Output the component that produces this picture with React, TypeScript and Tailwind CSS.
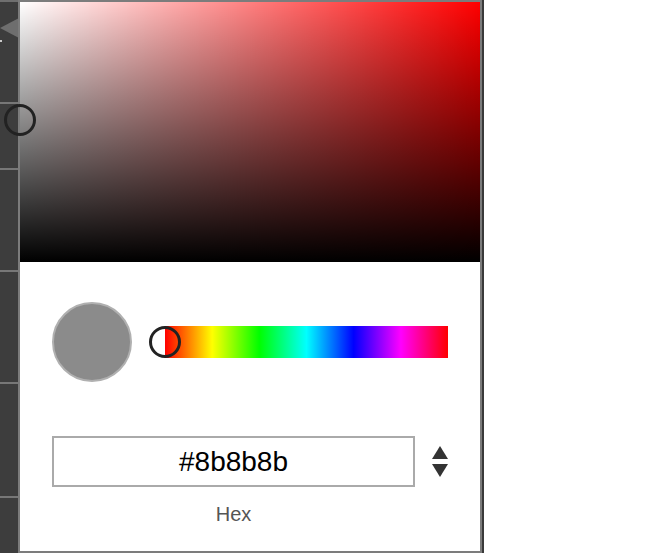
import React from 'react';

const App: React.FC = () => {
  const hex = '#8b8b8b';
  const lines = [100, 166, 268, 380, 494];

  return (
    <div className="flex w-[649px] h-[553px] bg-white font-['Liberation_Sans',Arial,sans-serif] overflow-hidden">
      {/* dark side strip behind the popover */}
      <div className="relative w-[18px] h-full bg-[#3d3d3d] border-t-2 border-[#6f6f6f]">
        {lines.map((y) => (
          <div key={y} className="absolute left-0 w-full h-[2px] bg-[#777]" style={{ top: y }} />
        ))}
        <div className="absolute left-0 top-[38px] w-[2px] h-[2px] bg-[#ccc]" />
        <div className="absolute left-0 top-[16px] w-0 h-0 border-y-[10px] border-y-transparent border-r-[19px] border-r-[#6e6e6e]" />
      </div>

      {/* popover */}
      <div className="relative flex flex-col w-[464px] h-full border-2 border-[#7c7c7c] bg-white">
        <div className="relative h-[260px] bg-[#ff0000]">
          <div className="absolute inset-0 bg-[linear-gradient(to_right,#ffffff,rgba(255,255,255,0))]" />
          <div className="absolute inset-0 bg-[linear-gradient(to_top,#000000,rgba(0,0,0,0))]" />
          <div className="absolute left-[-16px] top-[102px] w-[32px] h-[32px] rounded-full border-[3px] border-[#222]" />
        </div>

        <div className="flex flex-col px-[32px]">
          <div className="flex items-center mt-[40px] gap-[33px]">
            <div className="w-[80px] h-[80px] rounded-full bg-[#8b8b8b] border-2 border-[#b0b0b0]" />
            <div className="relative flex-1 h-[32px] bg-[linear-gradient(to_right,#f00,#ff0,#0f0,#0ff,#00f,#f0f,#f00)]">
              <div className="absolute left-[-16px] top-0 w-[32px] h-[32px] rounded-full border-[3px] border-[#222]" />
            </div>
          </div>

          <div className="flex items-center mt-[54px]">
            <div className="flex items-center justify-center w-[363px] h-[51px] border-2 border-[#aaa] text-[28px] text-black">
              {hex}
            </div>
            <div className="flex flex-col items-center gap-[5px] ml-auto w-[16px]">
              <div className="w-0 h-0 border-x-[8px] border-x-transparent border-b-[13px] border-b-[#333]" />
              <div className="w-0 h-0 border-x-[8px] border-x-transparent border-t-[13px] border-t-[#333]" />
            </div>
          </div>

          <div className="w-[363px] text-center text-[20px] text-[#555] mt-[12px]">Hex</div>
        </div>
      </div>

      <div className="w-[2px] h-full bg-[#3a3a3a]" />
    </div>
  );
};

export default App;
